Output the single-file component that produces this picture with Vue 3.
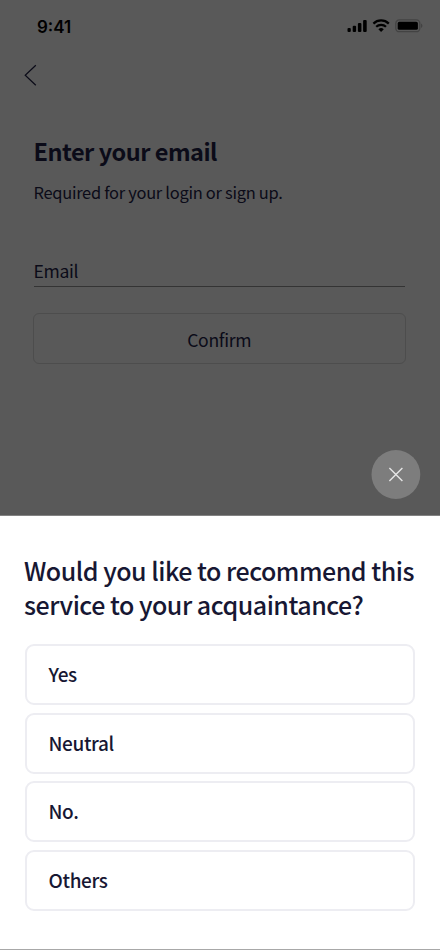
<script setup>
const options = ['Yes', 'Neutral', 'No.', 'Others']
</script>

<template>
  <main class="screen">
    <section class="page">
      <header class="status">
        <span class="time">9:41</span>
        <svg class="signals" width="76" height="14" viewBox="0 0 76 14">
          <rect x="0.5" y="9" width="3.3" height="4" rx="1.1" />
          <rect x="5.7" y="6.7" width="3.4" height="6.3" rx="1.1" />
          <rect x="10.9" y="4" width="3.5" height="9" rx="1.1" />
          <rect x="16.1" y="1" width="3.6" height="12" rx="1.1" />
          <g class="waves">
            <path d="M26.4 4.6a11 11 0 0 1 15.4 0" />
            <path d="M29.2 7.8a7 7 0 0 1 9.8 0" />
          </g>
          <path d="M31.4 10.2a4 4 0 0 1 5.4 0L34.1 13z" />
          <rect class="shell" x="48.8" y="0.9" width="24" height="11.8" rx="3.5" />
          <rect x="50.7" y="2.8" width="20.2" height="8" rx="1.6" />
          <path class="tip" d="M74 4.6v4.4c1.9-.8 1.9-3.6 0-4.4z" />
        </svg>
      </header>
      <svg class="back" width="14" height="22" viewBox="0 0 14 22">
        <path d="M11.8 1.2 1.2 11.2l10.6 10" />
      </svg>
      <div class="form">
        <h1>Enter your email</h1>
        <p class="hint">Required for your login or sign up.</p>
        <div class="field">Email</div>
        <button class="confirm">Confirm</button>
      </div>
      <button class="close" aria-label="Close">
        <svg width="49" height="49" viewBox="0 0 49 49">
          <circle cx="24.9" cy="24.5" r="24.4" />
          <path d="m18.4 18 13 13M31.4 18l-13 13" />
        </svg>
      </button>
    </section>
    <section class="sheet">
      <h2>Would you like to recommend this<br />service to your acquaintance?</h2>
      <div class="options">
        <button v-for="option in options" :key="option" class="option">{{ option }}</button>
      </div>
    </section>
  </main>
</template>

<style>
body {
  margin: 0;
}
</style>

<style scoped>
.screen {
  box-sizing: border-box;
  width: 440px;
  height: 950px;
  display: flex;
  flex-direction: column;
  overflow: hidden;
  background: #fff;
  border-bottom: 1px solid #a8a8a8;
  font-family: "Noto Sans CJK KR", "Noto Sans", sans-serif;
  color: #171733;
}
.screen * {
  box-sizing: border-box;
}
button {
  font-family: inherit;
  color: inherit;
  background: none;
  margin: 0;
}
.page {
  height: 516px;
  flex: none;
  display: flex;
  flex-direction: column;
  background: #595959;
  border-bottom: 1px solid #828282;
  color: #0b0b18;
}
.status {
  height: 64px;
  display: flex;
  justify-content: space-between;
  align-items: flex-start;
  padding: 17px 17px 0 37px;
}
.time {
  font: 600 17px/20px Inter, sans-serif;
  color: #000;
}
.signals {
  margin-top: 2px;
}
.waves {
  fill: none;
  stroke: #000;
  stroke-width: 2.2;
}
.shell {
  fill: none;
  stroke: #434343;
  stroke-width: 1.3;
}
.tip {
  fill: #434343;
}
.back {
  margin-left: 24px;
  fill: none;
  stroke: #0b0b18;
  stroke-width: 1.2;
}
.form {
  display: flex;
  flex-direction: column;
  padding: 47px 34px 0 33.5px;
}
h1 {
  margin: 0;
  font-size: 23.5px;
  line-height: 36px;
  font-weight: 700;
  letter-spacing: -0.5px;
}
.hint {
  margin: 10px 0 0;
  font-size: 16.45px;
  line-height: 26px;
  letter-spacing: -0.28px;
}
.field {
  height: 35px;
  margin-top: 47px;
  padding-top: 6px;
  border-bottom: 1px solid #343434;
  font-size: 17.6px;
  line-height: 26px;
  letter-spacing: -0.35px;
  width: 371.5px;
}
.confirm {
  width: 372.5px;
  height: 51px;
  margin: 26px 0 0 -0.5px;
  padding: 2px 0 0;
  border: 1.5px solid #4d4d4d;
  border-radius: 6px;
  font-size: 17.6px;
  line-height: 26px;
  letter-spacing: -0.3px;
}
.close {
  width: 49px;
  height: 49px;
  margin: auto 20px 16px auto;
  padding: 0;
  border: 0;
}
.close svg {
  display: block;
  overflow: visible;
}
.close circle {
  fill: #7d7d7d;
}
.close path {
  fill: none;
  stroke: #e6e6e6;
  stroke-width: 1.4;
}
.sheet {
  flex: 1;
  padding: 37px 24px 0;
}
h2 {
  margin: 0;
  font-size: 25px;
  line-height: 34px;
  font-weight: 500;
  letter-spacing: -0.48px;
  white-space: nowrap;
}
.options {
  display: flex;
  flex-direction: column;
  gap: 7.6px;
  margin: 23px 0 0 0.5px;
}
.option {
  width: 390.5px;
  height: 61px;
  padding: 0 22px 2px;
  border: 2px solid #ededf2;
  border-radius: 9px;
  text-align: left;
  font-size: 19px;
  font-weight: 500;
  letter-spacing: -0.36px;
}
</style>
